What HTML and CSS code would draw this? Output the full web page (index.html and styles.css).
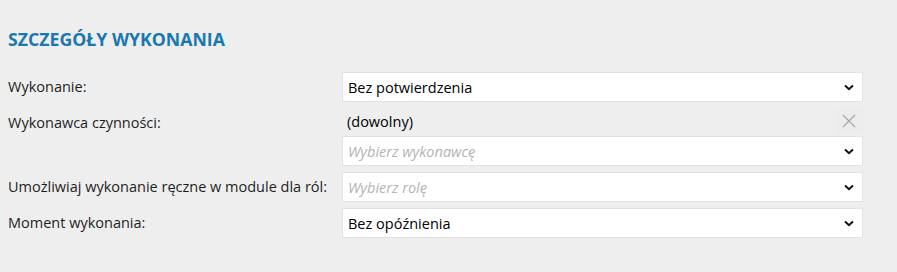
FILE: index.html
```html
<!DOCTYPE html>
<html lang="pl">
<head>
<meta charset="utf-8">
<link rel="stylesheet" href="styles.css">
</head>
<body>
<section class="panel">
  <h2 class="title">SZCZEGÓŁY WYKONANIA</h2>
  <div class="form">
    <div class="label">Wykonanie:</div>
    <div class="select">
      <span class="value">Bez potwierdzenia</span>
      <svg class="chev" width="10" height="7" viewBox="0 0 10 7"><path d="M1 1.5 L5 5.2 L9 1.5" fill="none" stroke="#111" stroke-width="2"/></svg>
    </div>

    <div class="label">Wykonawca czynności:</div>
    <div class="stack">
      <div class="chosen">
        <span class="value">(dowolny)</span>
        <span class="clear"><svg width="14" height="14" viewBox="0 0 14 14"><path d="M1 1 L13 13 M13 1 L1 13" stroke="#a8a8a8" stroke-width="1.2"/></svg></span>
      </div>
      <div class="select">
        <span class="placeholder">Wybierz wykonawcę</span>
        <svg class="chev" width="10" height="7" viewBox="0 0 10 7"><path d="M1 1.5 L5 5.2 L9 1.5" fill="none" stroke="#111" stroke-width="2"/></svg>
      </div>
    </div>

    <div class="label">Umożliwiaj wykonanie ręczne w module dla ról:</div>
    <div class="select">
      <span class="placeholder">Wybierz rolę</span>
      <svg class="chev" width="10" height="7" viewBox="0 0 10 7"><path d="M1 1.5 L5 5.2 L9 1.5" fill="none" stroke="#111" stroke-width="2"/></svg>
    </div>

    <div class="label">Moment wykonania:</div>
    <div class="select">
      <span class="value">Bez opóźnienia</span>
      <svg class="chev" width="10" height="7" viewBox="0 0 10 7"><path d="M1 1.5 L5 5.2 L9 1.5" fill="none" stroke="#111" stroke-width="2"/></svg>
    </div>
  </div>
</section>
</body>
</html>
```

FILE: styles.css
```css
html, body {
  margin: 0;
  padding: 0;
  background: #eeeeee;
}
body {
  font-family: "Open Sans", "Noto Sans", sans-serif;
  font-size: 14.5px;
  color: #1e1e1e;
}
.panel {
  padding: 28px 0 0 8px;
  width: 855px;
}
.title {
  margin: 0 0 22px 0;
  font-size: 17.7px;
  font-weight: 700;
  color: #1a78b0;
  line-height: 22px;
}
.form {
  display: grid;
  grid-template-columns: 334px 521px;
  row-gap: 6px;
  align-items: start;
}
.label {
  line-height: 30px;
  white-space: nowrap;
}
.select {
  box-sizing: border-box;
  height: 30px;
  background: #fff;
  border: 1px solid #e3e3e3;
  display: flex;
  align-items: center;
  justify-content: space-between;
  padding: 0 8px 0 5px;
}
.value {
  color: #000;
}
.placeholder {
  color: #b3b3b3;
  font-style: italic;
}
.chev {
  display: block;
}
.stack {
  display: flex;
  flex-direction: column;
  gap: 2px;
}
.chosen {
  height: 26px;
  display: flex;
  align-items: center;
  justify-content: space-between;
  padding-left: 5px;
}
.clear {
  width: 28px;
  height: 26px;
  display: flex;
  align-items: center;
  justify-content: center;
  background: #ececec;
}
.clear svg { display: block; }
```
